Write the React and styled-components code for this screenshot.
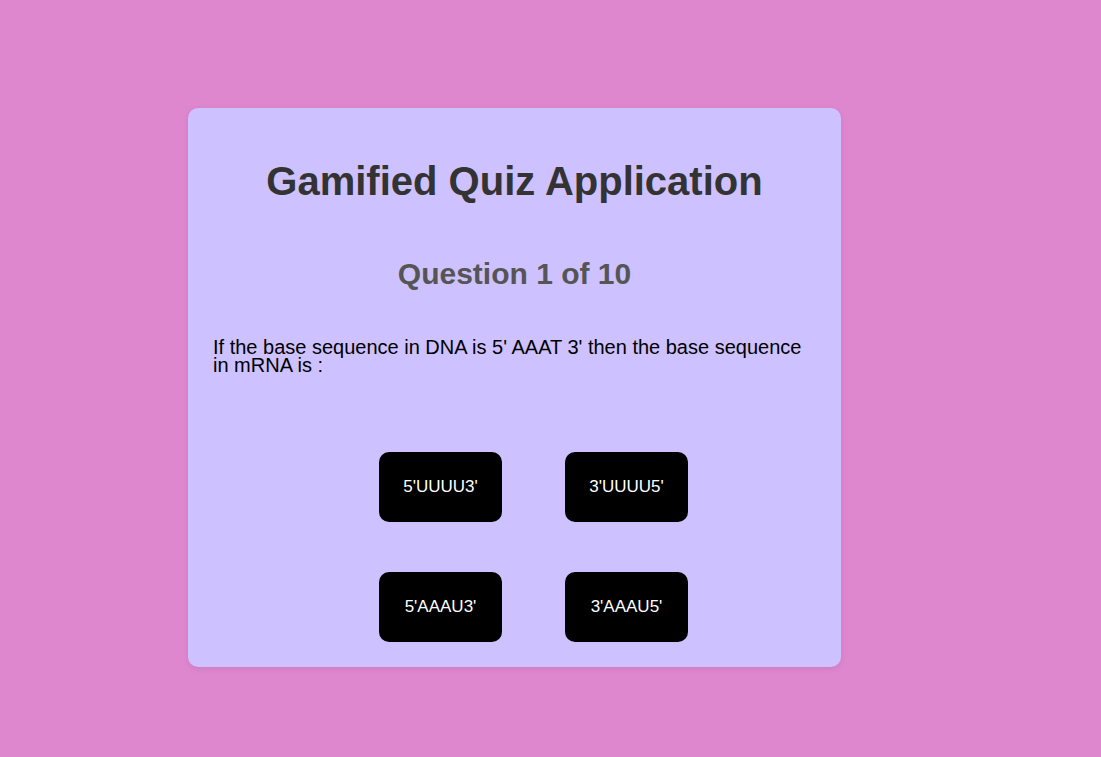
import React from "react";
import styled, { createGlobalStyle } from "styled-components";

const GlobalStyle = createGlobalStyle`
  html, body {
    margin: 0;
    padding: 0;
    background-color: #de87cf;
    font-family: "Liberation Sans", Arial, sans-serif;
  }
`;

const Page = styled.div`
  width: 100vw;
  min-height: 100vh;
  padding: 108px 0 0 188px;
  box-sizing: border-box;
`;

const Card = styled.div`
  width: 653px;
  height: 559px;
  box-sizing: border-box;
  padding: 0 25px;
  background-color: #cdc1ff;
  border-radius: 10px;
  box-shadow: 0 2px 6px rgba(0, 0, 0, 0.08);
  display: flex;
  flex-direction: column;
`;

const Title = styled.h1`
  margin: 50px 0 0;
  font-size: 40px;
  line-height: 46px;
  font-weight: bold;
  color: #333;
  text-align: center;
`;

const QuestionCount = styled.h2`
  margin: 53px 0 0;
  font-size: 30px;
  line-height: 34px;
  font-weight: bold;
  color: #555;
  text-align: center;
`;

const QuestionText = styled.p`
  margin: 47px 0 0;
  font-size: 20px;
  line-height: 18px;
  color: #000;
`;

const Options = styled.div`
  margin-top: 78px;
  padding-left: 38px;
  display: grid;
  grid-template-columns: 123px 123px;
  column-gap: 63px;
  row-gap: 50px;
  justify-content: center;
`;

const Option = styled.button`
  width: 123px;
  height: 70px;
  border: none;
  border-radius: 10px;
  background-color: #000;
  color: #fff;
  font-family: "Liberation Sans", Arial, sans-serif;
  font-size: 17px;
  cursor: pointer;
`;

const answers = ["5'UUUU3'", "3'UUUU5'", "5'AAAU3'", "3'AAAU5'"];

export default function App() {
  return (
    <>
      <GlobalStyle />
      <Page>
        <Card>
          <Title>Gamified Quiz Application</Title>
          <QuestionCount>Question 1 of 10</QuestionCount>
          <QuestionText>
            If the base sequence in DNA is 5' AAAT 3' then the base sequence in mRNA is :
          </QuestionText>
          <Options>
            {answers.map((a) => (
              <Option key={a}>{a}</Option>
            ))}
          </Options>
        </Card>
      </Page>
    </>
  );
}
